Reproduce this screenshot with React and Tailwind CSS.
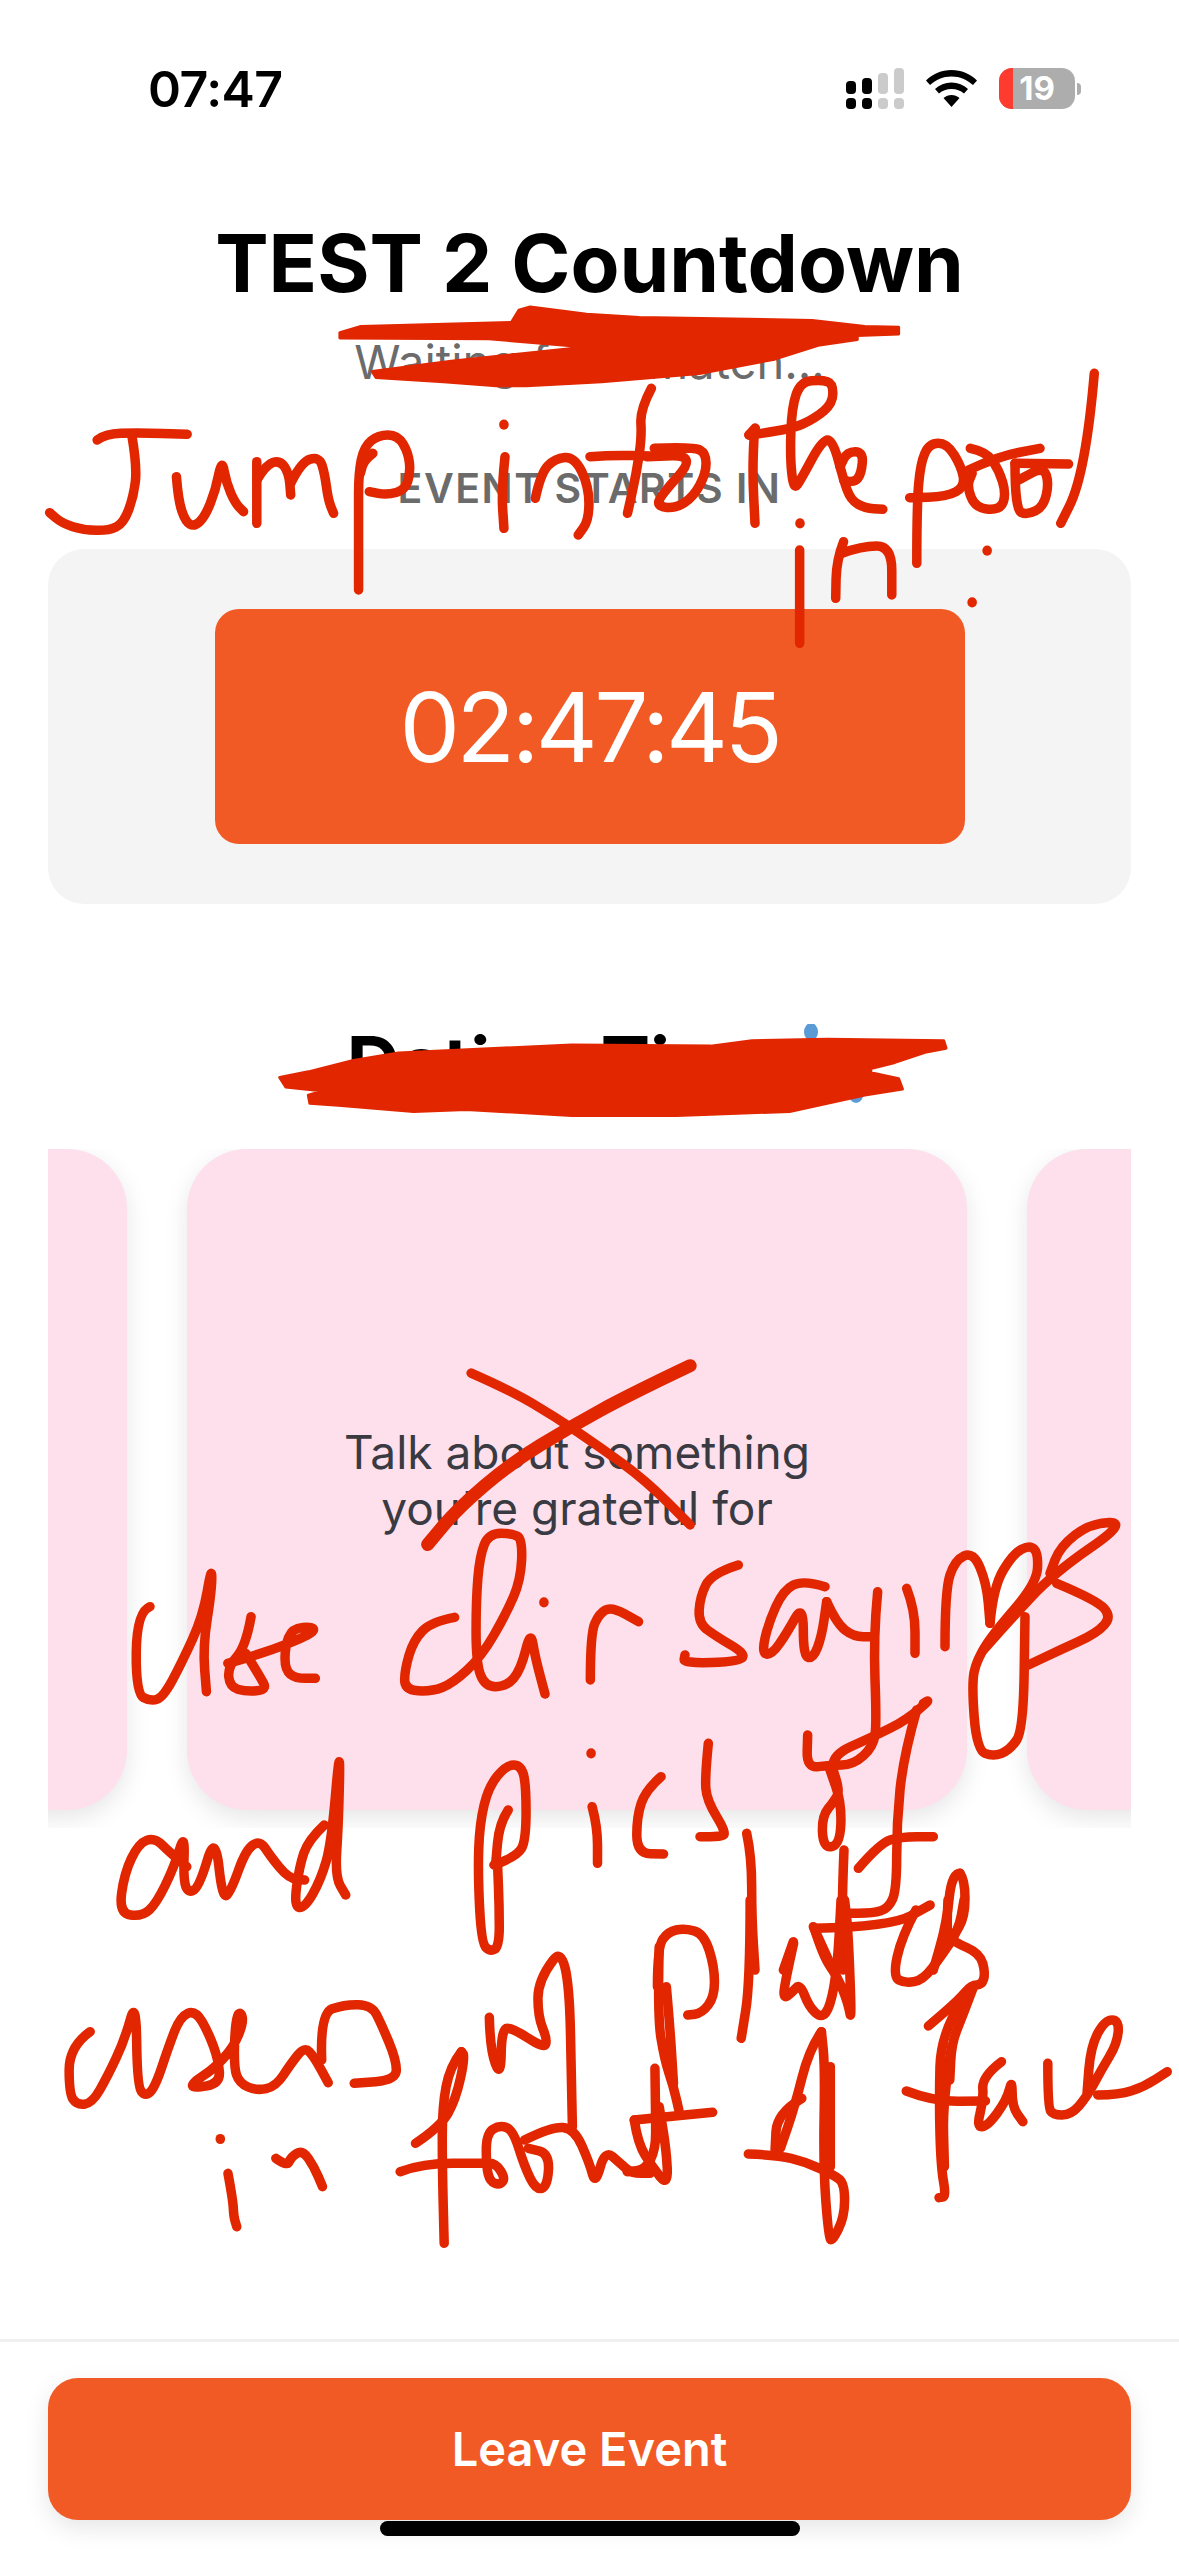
// ink strokes are traced from zoomed crops, each group carries its crop origin and scale
function smooth(points, { x0, y0, kx, ky }) {
  const p = points.map(([x, y]) => [x0 + x / kx, y0 + y / ky]);
  if (p.length < 3) return `M${p.map((q) => q.join(" ")).join("L")}`;
  let d = `M${p[0][0]} ${p[0][1]}`;
  for (let i = 1; i < p.length - 1; i++) {
    const mx = (p[i][0] + p[i + 1][0]) / 2;
    const my = (p[i][1] + p[i + 1][1]) / 2;
    d += `Q${p[i][0]} ${p[i][1]} ${mx} ${my}`;
  }
  const last = p[p.length - 1];
  return d + `L${last[0]} ${last[1]}`;
}

function polygon(points, off) {
  return points.map(([x, y]) => `${x * 0.752},${off + y / 2.45}`).join(" ");
}

const inkGroups = [
  {
    x0: 30, y0: 340, kx: 2.8, ky: 3,
    strokes: [
      [[188, 300], [210, 282], [300, 278], [440, 283]],
      [[285, 285], [300, 380], [290, 470], [262, 550], [220, 572], [150, 570], [90, 550], [55, 518]],
      [[410, 410], [415, 480], [435, 545], [460, 560], [490, 530], [520, 450], [537, 355], [550, 430], [575, 490], [598, 515]],
      [[635, 365], [635, 550]],
      [[635, 420], [660, 375], [700, 360], [725, 400], [730, 465]],
      [[730, 430], [760, 365], [810, 350], [825, 400], [835, 480], [850, 520]],
      [[920, 750], [920, 520], [920, 400], [935, 320], [975, 285], [1030, 285], [1060, 340], [1065, 400], [1050, 450], [1000, 465], [950, 455]],
      [[960, 340], [935, 360], [925, 400]],
      [[1327, 253], [1327, 255]],
      [[1330, 350], [1320, 450], [1327, 565]],
      [[1415, 475], [1430, 400], [1470, 355], [1525, 350], [1565, 440], [1565, 540], [1535, 585]],
    ],
  },
  {
    x0: 590, y0: 340, kx: 2.8, ky: 3,
    strokes: [
      [[172, 145], [140, 210], [145, 290], [130, 400], [105, 520]],
      [[0, 350], [60, 345], [170, 348]],
      [[180, 325], [290, 320], [325, 340], [325, 400], [290, 470], [240, 505], [190, 500], [195, 470], [300, 345], [160, 350]],
      [[445, 285], [465, 260], [460, 270], [455, 400], [462, 550]],
      [[445, 285], [560, 270], [630, 235], [680, 190], [680, 130], [650, 120], [590, 125], [565, 200], [560, 350], [570, 450], [590, 420], [650, 300], [680, 300], [710, 420], [730, 480], [770, 505], [820, 508]],
      [[710, 420], [740, 430], [760, 400], [765, 335], [720, 335], [700, 380]],
      [[915, 670], [915, 500], [925, 370], [950, 310], [1000, 310], [1040, 380], [1050, 440], [1000, 470], [895, 473]],
      [[1065, 325], [1110, 335], [1145, 390], [1165, 460], [1150, 510], [1080, 505], [1055, 440], [1070, 400]],
      [[1060, 390], [1140, 350], [1260, 325]],
      [[1190, 370], [1340, 372]],
      [[1190, 370], [1190, 510], [1225, 525], [1270, 500], [1285, 430], [1270, 380], [1200, 420]],
      [[1412, 100], [1400, 250], [1365, 450], [1318, 550]],
      [[588, 549], [588, 551]],
      [[587, 630], [587, 910]],
      [[710, 605], [690, 660], [688, 775]],
      [[705, 640], [760, 618], [845, 618], [845, 765]],
      [[1112, 631], [1112, 633]],
      [[1070, 786], [1070, 788]],
    ],
  },
  {
    x0: 0, y0: 1280, kx: 1.333, ky: 2.45,
    strokes: [[[628, 228], [680, 270], [740, 335], [800, 410], [860, 490], [920, 600]]],
  },
  {
    x0: 110, y0: 1490, kx: 2.8, ky: 3,
    strokes: [
      [[112, 350], [75, 365], [72, 610], [115, 635], [150, 620], [200, 520], [260, 380], [285, 225], [285, 300], [260, 470], [270, 605]],
      [[395, 380], [380, 470], [330, 530], [335, 590], [380, 605], [440, 600], [420, 560], [380, 490]],
      [[330, 520], [430, 490], [570, 430], [570, 410], [510, 415], [490, 470], [490, 540], [520, 565], [575, 565]],
      [[965, 382], [900, 395], [850, 450], [825, 540], [825, 600], [900, 605], [960, 580], [1040, 500], [1110, 370], [1150, 270], [1155, 150], [1130, 130], [1060, 130], [1035, 200], [1025, 330], [1025, 520], [1050, 590], [1110, 590], [1150, 540], [1178, 420], [1190, 500], [1218, 612]],
      [[1215, 336], [1215, 338]],
      [[1345, 570], [1345, 430], [1370, 370], [1405, 350], [1480, 395]],
      [[215, 1130], [170, 1090], [125, 1042], [80, 1060], [40, 1150], [25, 1270], [90, 1280], [130, 1240], [180, 1130], [210, 1025], [205, 1170], [220, 1210], [250, 1190], [295, 1030], [315, 1230], [340, 1200], [380, 1080], [420, 1050], [450, 1100], [500, 1165], [545, 1170]],
      [[600, 1005], [555, 1050], [530, 1130], [515, 1250], [545, 1255], [590, 1170], [620, 1060], [645, 745], [640, 1000], [630, 1160], [660, 1215]],
      [[1115, 960], [1090, 1000], [1080, 1120]],
      [[1075, 1125], [1140, 1100], [1165, 1050], [1165, 880], [1150, 825], [1110, 825], [1060, 890], [1035, 1000], [1030, 1150], [1040, 1360], [1065, 1385], [1090, 1370], [1090, 1250], [1085, 1120]],
      [[1347, 789], [1347, 791]],
      [[1350, 950], [1365, 1010], [1365, 1120]],
      [[1543, 860], [1500, 900], [1475, 980], [1475, 1090], [1550, 1092]],
    ],
  },
  {
    x0: 640, y0: 1490, kx: 3, ky: 3,
    strokes: [
      [[205, 760], [195, 860], [200, 930], [260, 1030], [240, 1040], [180, 1040]],
      [[295, 225], [215, 250], [180, 320], [175, 400], [230, 440], [315, 490], [300, 515], [130, 520], [135, 495]],
      [[555, 290], [490, 270], [430, 300], [385, 400], [365, 490], [395, 495], [440, 430], [490, 340], [490, 500], [520, 505], [545, 440], [560, 335]],
      [[560, 335], [590, 400], [640, 440], [700, 440]],
      [[713, 305], [700, 440], [710, 700], [700, 770], [640, 825], [570, 825], [500, 835], [503, 735]],
      [[850, 640], [880, 620], [800, 690], [700, 740], [565, 800], [600, 900], [585, 930], [545, 980], [550, 1075], [600, 1065], [605, 940], [570, 840]],
      [[830, 660], [790, 800], [770, 1000], [770, 1200], [745, 1255], [700, 1270], [610, 1270]],
      [[655, 1135], [720, 1060], [780, 1040], [880, 1040]],
      [[800, 295], [825, 360], [825, 490]],
      [[915, 470], [915, 300], [945, 210], [1000, 185], [1040, 280], [1050, 400]],
      [[1050, 400], [1060, 290], [1120, 190], [1170, 165], [1195, 190], [1190, 280], [1060, 430], [1010, 510], [995, 580], [1010, 780], [1060, 800], [1110, 780], [1150, 720], [1155, 380]],
      [[1030, 480], [1110, 390], [1240, 250], [1465, 95], [1350, 100], [1260, 170], [1230, 250]],
      [[1250, 280], [1370, 330], [1415, 380], [1370, 430], [1260, 480], [1165, 525]],
      [[320, 1030], [335, 1100], [335, 1280], [345, 1440]],
      [[612, 1080], [605, 1250], [610, 1440]],
      [[460, 1355], [430, 1440]],
      [[520, 1310], [570, 1420]],
      [[960, 1150], [935, 1150], [920, 1300], [880, 1440]],
      [[960, 1150], [975, 1170], [975, 1280], [940, 1340]],
    ],
  },
  {
    x0: 620, y0: 1900, kx: 2.805, ky: 3,
    strokes: [
      [[105, 260], [105, 140], [135, 95], [180, 85], [235, 100], [265, 200], [265, 290], [230, 340], [190, 345]],
      [[110, 140], [105, 350], [125, 480], [150, 560], [165, 630]],
      [[130, 260], [140, 380], [150, 550]],
      [[365, 0], [365, 250], [340, 415]],
      [[487, 130], [460, 260], [460, 295], [480, 280], [505, 250], [530, 320], [565, 355], [590, 320], [610, 200], [620, 0]],
      [[545, 85], [570, 170], [610, 230], [640, 310], [650, 370], [640, 90], [630, 0]],
      [[545, 85], [760, 80], [870, 15]],
      [[830, 30], [790, 110], [765, 230], [800, 250], [850, 240], [900, 170], [950, 90], [965, 0]],
      [[920, 0], [915, 100], [935, 125], [1010, 160], [1025, 220], [1015, 255], [985, 255], [950, 300], [865, 378]],
      [[990, 265], [960, 350], [930, 430], [925, 540]],
      [[960, 300], [900, 400], [895, 600], [900, 800], [915, 890], [895, 893]],
      [[930, 440], [905, 600], [910, 800]],
      [[803, 573], [880, 605], [1025, 603]],
      [[1070, 485], [1015, 530], [1020, 600], [1000, 680], [1030, 680], [1085, 600], [1100, 535], [1100, 620], [1130, 665]],
      [[1200, 490], [1200, 620], [1215, 645], [1265, 645], [1310, 590], [1350, 510], [1395, 430], [1400, 360], [1360, 360], [1320, 440], [1310, 580]],
      [[1340, 585], [1400, 585], [1470, 560], [1535, 515]],
      [[510, 595], [440, 640], [435, 750]],
      [[565, 395], [530, 450], [490, 620], [450, 745]],
      [[360, 762], [440, 765], [520, 785], [600, 825], [630, 850], [630, 950], [595, 1025], [585, 1010], [570, 800], [575, 500], [565, 395]],
      [[590, 500], [590, 800]],
      [[98, 505], [100, 650], [100, 750], [70, 810], [20, 815]],
      [[40, 660], [260, 637]],
      [[40, 660], [50, 730], [90, 800], [135, 860], [130, 750], [110, 620]],
    ],
  },
  {
    x0: 50, y0: 1900, kx: 2.613, ky: 3,
    strokes: [
      [[105, 395], [50, 440], [50, 580], [70, 615], [110, 610], [150, 530], [195, 420], [225, 295], [228, 560], [250, 590], [275, 560], [310, 440], [340, 350], [380, 330], [415, 400], [440, 480], [445, 550], [375, 565], [370, 550], [430, 505], [480, 440], [505, 370], [500, 335], [485, 350], [480, 500], [495, 550], [540, 572], [590, 560], [630, 490], [665, 440], [690, 470], [727, 548]],
      [[710, 480], [705, 340], [770, 313], [840, 315], [865, 370], [905, 480], [905, 540], [795, 550]],
      [[1148, 352], [1150, 450], [1178, 535], [1180, 385], [1210, 385], [1290, 445], [1300, 420], [1275, 350], [1275, 240], [1355, 120], [1365, 680]],
      [[445, 716], [445, 718]],
      [[465, 820], [478, 900], [480, 950], [488, 980]],
      [[590, 775], [620, 800], [630, 770], [660, 750], [690, 800], [712, 860]],
      [[1075, 455], [1045, 500], [1025, 620], [1025, 800], [1030, 1030]],
      [[955, 730], [1020, 680], [1060, 600], [1085, 470], [1075, 455]],
      [[915, 815], [975, 790], [1130, 790], [1165, 790], [1190, 835], [1175, 855], [1150, 845], [1140, 800], [1140, 700], [1175, 675], [1210, 690], [1240, 800], [1270, 870], [1300, 860], [1305, 760], [1250, 745]],
      [[1240, 720], [1310, 680], [1370, 685], [1410, 790], [1425, 855], [1450, 750], [1490, 790], [1520, 820], [1568, 820]],
    ],
  },
];

const titleBlob = [[452, 815], [480, 800], [680, 790], [690, 760], [705, 752], [780, 770], [850, 778], [1080, 785], [1150, 800], [1195, 802], [1195, 818], [1140, 822], [1140, 832], [1090, 845], [1030, 880], [930, 915], [800, 935], [700, 945], [660, 945], [590, 935], [500, 925], [495, 910], [600, 885], [780, 850], [650, 830], [452, 828]];
const tipsBlob = [[372, 1072], [410, 1058], [470, 1030], [530, 1012], [760, 992], [945, 995], [1000, 982], [1100, 978], [1255, 982], [1258, 1000], [1230, 1010], [1190, 1035], [1158, 1050], [1158, 1060], [1195, 1075], [1200, 1100], [1150, 1115], [1050, 1155], [900, 1165], [760, 1165], [620, 1150], [550, 1155], [450, 1140], [412, 1135], [410, 1115], [430, 1105], [380, 1095]];
const crossOrigin = { x0: 0, y0: 1280, kx: 1.333, ky: 2.45 };
const crossStroke = [[920, 210], [840, 280], [760, 360], [680, 450], [610, 560], [570, 648]];

function InkLayer() {
  return (
    <svg
      className="absolute left-0 top-0 pointer-events-none"
      width="1179"
      height="2556"
      viewBox="0 0 1179 2556"
      fill="none"
      stroke="#e12600"
      strokeWidth="9.5"
      strokeLinecap="round"
      strokeLinejoin="round"
    >
      <polygon points={polygon(titleBlob, 0)} fill="#e12600" strokeWidth="3" />
      <polygon points={polygon(tipsBlob, 640)} fill="#e12600" strokeWidth="3" />
      <path d={smooth(crossStroke, crossOrigin)} strokeWidth="13" />
      {inkGroups.map((group, g) =>
        group.strokes.map((s, i) => <path key={`${g}-${i}`} d={smooth(s, group)} />)
      )}
    </svg>
  );
}

function StatusIcons() {
  return (
    <div className="flex items-center">
      <svg width="58" height="41" viewBox="0 0 58 41">
        <rect x="0" y="13" width="10" height="13" rx="4" fill="#000" />
        <rect x="16" y="10" width="10" height="16" rx="4" fill="#000" />
        <rect x="32" y="5" width="10" height="21" rx="4" fill="#cbcbcb" />
        <rect x="48" y="0" width="10" height="26" rx="4" fill="#cbcbcb" />
        <rect x="0" y="30" width="10" height="11" rx="4" fill="#000" />
        <rect x="16" y="30" width="10" height="11" rx="4" fill="#000" />
        <rect x="32" y="30" width="10" height="11" rx="4" fill="#cbcbcb" />
        <rect x="48" y="30" width="10" height="11" rx="4" fill="#cbcbcb" />
      </svg>
      <svg className="ml-[22px]" width="51" height="37" viewBox="0 0 51 37">
        <path d="M25.5 0C15.5 0 7 3.8 0 10.5L4 15C10 9.5 17 6.4 25.5 6.4S41 9.5 47 15L51 10.500C44 3.800 35.500 0 25.500 0Z" fill="#000" />
        <path d="M25.500 12.500C19 12.500 13.500 14.800 9 19L13 23.500C16.500 20.500 20.500 19 25.500 19S34.500 20.500 38 23.500L42 19C37.500 14.800 32 12.500 25.500 12.500Z" fill="#000" />
        <path d="M25.500 25C22.500 25 20 26 17.500 28L25.500 37L33.500 28C31 26 28.500 25 25.500 25Z" fill="#000" />
      </svg>
      <div className="relative ml-[22px] flex h-[41px] w-[76px] items-center justify-center overflow-hidden rounded-[13px] bg-[#adadad]">
        <div className="absolute left-0 top-0 h-full w-[14px] bg-[#ff3b30]" />
        <span className="relative text-[33px] font-bold leading-none text-white">19</span>
      </div>
      <div className="ml-[2px] h-[12px] w-[4px] rounded-r-full bg-[#adadad]" />
    </div>
  );
}

function TipCard({ children, className }) {
  return (
    <div className={`flex h-[661px] w-[780px] shrink-0 items-center justify-center rounded-[60px] bg-[#fde0ec] text-center shadow-[0_8px_24px_rgba(0,0,0,0.1)] ${className}`}>
      {children}
    </div>
  );
}

export default function App() {
  return (
    <div className="relative flex h-[2556px] w-[1179px] flex-col overflow-hidden bg-white font-['Inter',sans-serif]">
      {/* STATUS BAR */}
      <div className="flex h-[57px] items-center justify-between mt-[60px] pl-[148px] pr-[98px]">
        <span className="text-[50px] font-semibold leading-none tracking-[-0.5px] text-black">07:47</span>
        <StatusIcons />
      </div>

      {/* HEADER */}
      <h1 className="mt-[98px] text-center text-[80px] font-bold leading-[96px] text-black">
        TEST 2 Countdown
      </h1>
      <p className="mt-[23px] text-center text-[47px] leading-[56px] text-[#6b6b6b]">
        Waiting for a match...
      </p>
      <p className="mt-[74px] text-center text-[41px] font-semibold leading-[48px] tracking-[1.5px] text-[#6b6b6b]">
        EVENT STARTS IN
      </p>

      {/* COUNTDOWN */}
      <div className="mx-[48px] mt-[37px] flex h-[355px] items-center justify-center rounded-[36px] bg-[#f4f4f4]">
        <div className="flex h-[235px] w-[750px] items-center justify-center rounded-[24px] bg-[#f15a24] text-[96px] leading-none tracking-[-3.5px] text-white">
          02:47:45
        </div>
      </div>

      {/* TIPS */}
      <h2 className="mt-[120px] text-center text-[74px] font-bold leading-[78px] text-black">
        Dating Tips
        <span className="relative ml-[8px] inline-block h-[78px] w-[66px] align-top">
          <svg className="absolute left-[37px] top-0" width="66" height="80" viewBox="0 0 66 80">
            <ellipse cx="8" cy="8" rx="7" ry="9" fill="#5b9bd5" />
            <path d="M30 70L38 66L34 78Z" fill="#c0129a" />
            <ellipse cx="53" cy="68" rx="8" ry="11" fill="#5b9bd5" />
            <path d="M60 62L66 66L60 70Z" fill="#33587a" />
          </svg>
        </span>
      </h2>
      <div className="mx-[48px] mt-[47px] flex h-[679px] gap-[60px] overflow-hidden">
        <TipCard className="ml-[-701px]" />
        <TipCard className="">
          <p className="text-[46px] leading-[56px] text-[#3a3a42]">
            Talk about something
            <br />
            you're grateful for
          </p>
        </TipCard>
        <TipCard className="" />
      </div>

      {/* FOOTER */}
      <div className="mt-auto border-t-[3px] border-[#f0f0f0] px-[48px] pb-[36px] pt-[36px]">
        <button
          type="button"
          className="h-[142px] w-full rounded-[30px] bg-[#f15a24] text-[47px] font-semibold text-white shadow-[0_8px_24px_rgba(0,0,0,0.1)]"
        >
          Leave Event
        </button>
      </div>

      <InkLayer />
      <div className="absolute bottom-[20px] left-[380px] h-[15px] w-[420px] rounded-full bg-black" />
    </div>
  );
}
